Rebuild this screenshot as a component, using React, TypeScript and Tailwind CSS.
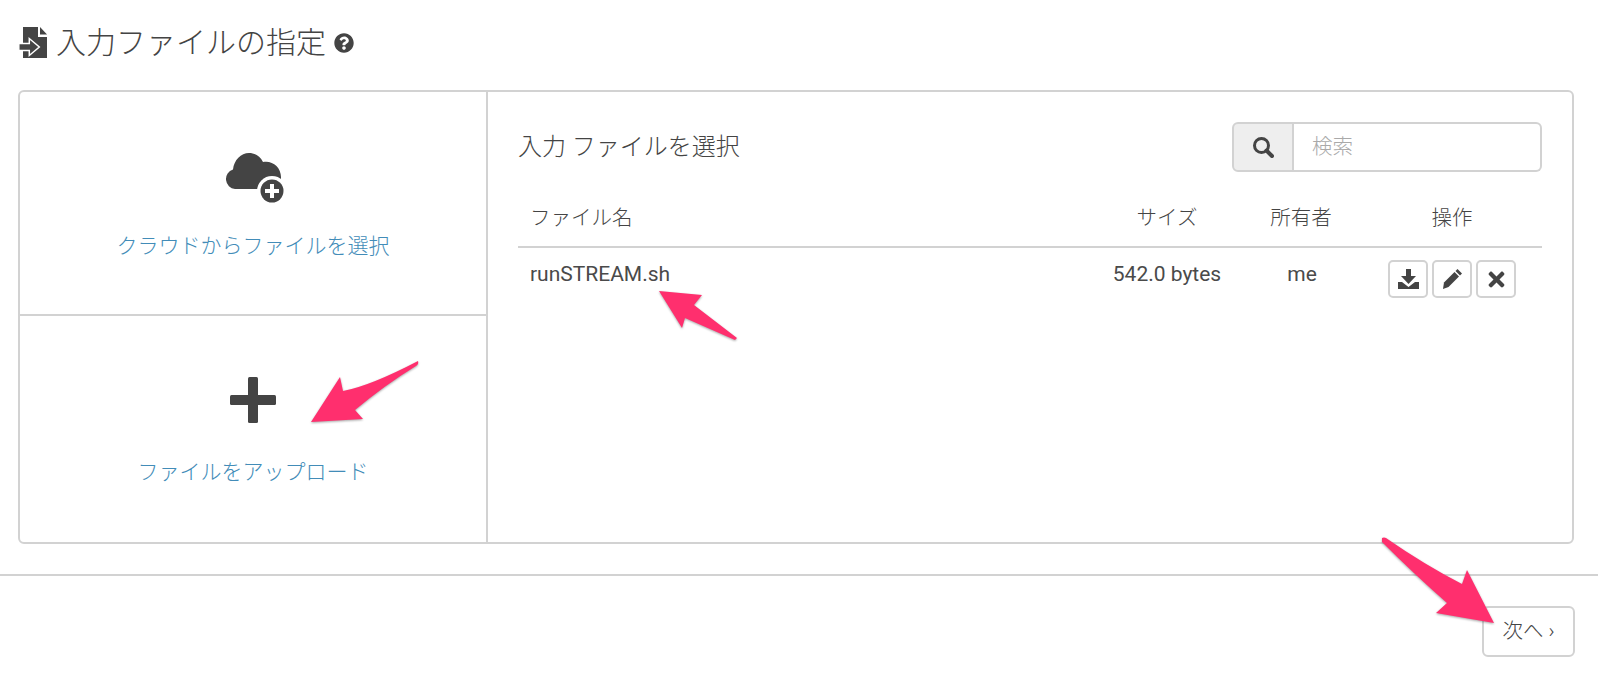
import React from "react";
import { FaQuestionCircle, FaTimes } from "react-icons/fa";

const font = { fontFamily: '"Roboto", "Noto Sans CJK JP", sans-serif' };

function FileImportIcon() {
  return (
    <svg width="30" height="32" viewBox="0 0 30 32" className="text-[#444] mr-[8px]">
      <path fill="currentColor" d="M5 0h15v10h9v21H5z" />
      <path fill="currentColor" d="M22 0l7 7.500h-7z" />
      <path
        fill="currentColor"
        stroke="#fff"
        strokeWidth="1.500"
        strokeLinejoin="miter"
        d="M.8 16.500h10.500v-5l10 8.500-10 8.500v-5H.8z"
      />
    </svg>
  );
}

function CloudPlus() {
  return (
    <svg width="60" height="54" viewBox="0 0 60 54" className="text-[#444] ml-[4px]">
      <path
        fill="currentColor"
        d="M10 38a10 10 0 0 1-2-19.500C9 9 16 2 24 2c6 0 11 3 14 9 9-2 18 5 18 15v12z"
      />
      <circle cx="47" cy="40" r="15" fill="#fff" />
      <circle cx="47" cy="40" r="11.500" fill="currentColor" />
      <path d="M45 33h4v5h5v4h-5v5h-4v-5h-5v-4h5z" fill="#fff" />
    </svg>
  );
}

function PlusIcon() {
  return (
    <svg width="46" height="46" viewBox="0 0 46 46" fill="#444">
      <rect x="18" y="0" width="10" height="46" rx="1.500" />
      <rect x="0" y="18" width="46" height="10" rx="1.500" />
    </svg>
  );
}

function SearchIcon() {
  return (
    <svg width="21" height="21" viewBox="0 0 21 21" fill="none" stroke="#444">
      <circle cx="8.500" cy="8.500" r="7" strokeWidth="3" />
      <path d="M13.500 13.500L19 19" strokeWidth="4" strokeLinecap="round" />
    </svg>
  );
}

function DownloadIcon() {
  return (
    <svg width="21" height="21" viewBox="0 0 21 21" fill="currentColor">
      <path d="M8 0h5v7h5l-7.500 8L3 7h5z" />
      <path d="M0 13h4l6.500 5 6.500-5h4v7H0z" />
    </svg>
  );
}

function PencilIcon() {
  return (
    <svg width="20" height="20" viewBox="0 0 20 20" fill="currentColor">
      <path d="M15.500 0L20 4.500 18 6.500 13.500 2z" />
      <path d="M12.500 3L17 7.500 6.500 18 1 20 2 13.500z" />
    </svg>
  );
}

function IconButton({ children }: { children: React.ReactNode }) {
  return (
    <div className="w-10 h-[38px] flex items-center justify-center bg-white border-2 border-[#d2d2d2] rounded-[5px] text-[#444]">
      {children}
    </div>
  );
}

function Arrows() {
  return (
    <svg
      width="1598"
      height="676"
      viewBox="0 0 1598 676"
      className="absolute top-0 left-0 pointer-events-none drop-shadow-[0_1px_1px_rgba(0,0,0,0.35)]"
    >
      <g fill="#ff2f6e" strokeLinejoin="round">
        <path d="M418 361Q419 364 416 366Q385 385 355 410L363 419L311 422L340 377L343 391Q370 386 418 361Z" />
        <path d="M659 291L702 295L694 305L737 338L735 340L685 318L682 328Z" />
        <path d="M1382 538Q1384 537 1386 538Q1425 565 1462 584L1467 570L1494 623L1436 613L1447 603Q1415 575 1382 542Z" />
      </g>
    </svg>
  );
}

export default function App() {
  return (
    <div className="relative w-[1598px] h-[676px] overflow-hidden bg-white text-[#444]" style={font}>
      <div className="flex items-center h-[90px] pl-[18px] pb-[4px]">
        <FileImportIcon />
        <h1 className="text-[30px] font-light leading-none whitespace-nowrap">入力ファイルの指定</h1>
        <FaQuestionCircle className="text-[20px] ml-[8px]" />
      </div>

      <div className="flex ml-[18px] w-[1556px] h-[454px] border-2 border-[#d2d2d2] rounded-[6px]">
        <div className="w-[468px] flex flex-col border-r-2 border-[#d2d2d2]">
          <div className="h-[224px] flex flex-col items-center border-b-2 border-[#d2d2d2] pt-[59px]">
            <CloudPlus />
            <a className="mt-[26px] text-[21px] leading-[30px] text-[#428cb8] font-light whitespace-nowrap">
              クラウドからファイルを選択
            </a>
          </div>
          <div className="flex-1 flex flex-col items-center pt-[61px]">
            <PlusIcon />
            <a className="mt-[34px] text-[21px] leading-[30px] text-[#428cb8] font-light whitespace-nowrap">
              ファイルをアップロード
            </a>
          </div>
        </div>

        <div className="flex-1 pl-[30px] pr-[30px] pt-[30px]">
          <div className="flex items-center justify-between h-[50px]">
            <h2 className="text-[24px] font-light whitespace-nowrap">入力 ファイルを選択</h2>
            <div className="flex w-[310px] h-[50px]">
              <div className="w-[62px] flex items-center justify-center bg-[#eeeeee] border-2 border-[#d2d2d2] rounded-l-[6px]">
                <SearchIcon />
              </div>
              <div className="flex-1 flex items-center pl-[18px] border-2 border-l-0 border-[#d2d2d2] rounded-r-[6px] text-[20.500px] font-light text-[#a9a9a9]">
                検索
              </div>
            </div>
          </div>

          <div className="flex items-center h-[76px] border-b-2 border-[#d2d2d2] pt-[18px] text-[20.500px] font-light">
            <div className="flex-1 pl-[12px]">ファイル名</div>
            <div className="w-[130px] text-center">サイズ</div>
            <div className="w-[132px] pl-[6px] text-center">所有者</div>
            <div className="w-[178px] pr-[2px] text-center">操作</div>
          </div>

          <div className="flex items-start pt-[11px] text-[21px] text-[#4a4a4a]">
            <div className="flex-1 pl-[12px] leading-[30px]">runSTREAM.sh</div>
            <div className="w-[130px] text-center leading-[30px] whitespace-nowrap">542.0 bytes</div>
            <div className="w-[132px] pl-[8px] text-center leading-[30px]">me</div>
            <div className="w-[178px] pl-[24px] pt-[1px] flex gap-[4px]">
              <IconButton><DownloadIcon /></IconButton>
              <IconButton><PencilIcon /></IconButton>
              <IconButton><FaTimes className="text-[23px]" /></IconButton>
            </div>
          </div>
        </div>
      </div>

      <div className="mt-[30px] border-t-2 border-[#d2d2d2] flex justify-end pr-[23px] pt-[30px]">
        <div className="w-[93px] h-[51px] flex items-center justify-center border-2 border-[#d2d2d2] rounded-[6px] text-[20.500px] font-light">
          次へ ›
        </div>
      </div>

      <Arrows />
    </div>
  );
}
